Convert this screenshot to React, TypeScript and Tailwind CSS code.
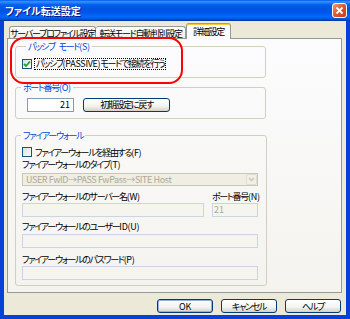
import React from "react";

function L({ children }: { children: React.ReactNode }) {
  return <span className="tracking-[-0.3px]">{children}</span>;
}

function Check({ checked }: { checked?: boolean }) {
  return (
    <div className="w-[10px] h-[10px] border border-[#1C5180] bg-[linear-gradient(135deg,#DCDCD7,#FFFFFF)] flex items-center justify-center shrink-0">
      {checked && (
        <svg width="8" height="8" viewBox="0 0 8 8">
          <path d="M1 4 L3 6 L7 1.5" stroke="#21A121" strokeWidth="1.8" fill="none" />
        </svg>
      )}
    </div>
  );
}

function Btn({ children, def, w }: { children: React.ReactNode; def?: boolean; w: string }) {
  return (
    <div
      className={`${w} h-[14px] rounded-[3px] border border-[#003C74] bg-[linear-gradient(180deg,#FFFFFF,#F3F3EF_60%,#D6D0C5)] flex items-center justify-center whitespace-nowrap ${
        def ? "shadow-[inset_0_0_0_1px_#97AEE2]" : ""
      }`}
    >
      {children}
    </div>
  );
}

export default function App() {
  return (
    <div className="relative w-[350px] h-[319px] bg-[#0841D9] flex flex-col font-['Noto_Sans_CJK_JP',sans-serif] [font-feature-settings:'palt'] text-[9px] leading-[11px] tracking-[-1.3px] text-black overflow-hidden">
      {/* Title bar */}
      <div className="h-[21px] shrink-0 flex items-center pl-[5px] pr-[3px] bg-[linear-gradient(180deg,#0058EE_0%,#3593FF_8%,#0262EE_22%,#0054E3_40%,#0055EB_60%,#026AFE_80%,#0052D6_92%,#003092_100%)]">
        <span className="text-white font-bold text-[10px] tracking-[0px] [text-shadow:1px_1px_0_#0A1883]">
          ファイル転送設定
        </span>
        <div className="ml-auto w-[15px] h-[15px] rounded-[3px] border border-white bg-[linear-gradient(135deg,#F09A7D,#E0552B_50%,#C23F1A)] flex items-center justify-center">
          <svg width="9" height="9" viewBox="0 0 9 9">
            <path d="M1.5 1.5 L7.5 7.5 M7.5 1.5 L1.5 7.5" stroke="white" strokeWidth="1.8" />
          </svg>
        </div>
      </div>

      {/* Body */}
      <div className="flex-1 ml-[4px] mr-[4px] mb-[4px] bg-[#ECE9D8] flex flex-col pt-[2px]">
        {/* Tabs */}
        <div className="h-[16px] flex items-end pl-[5px]">
          <div className="w-[87px] h-[13px] border border-b-0 border-[#919B9C] rounded-t-[3px] bg-[linear-gradient(180deg,#FFFFFF,#ECEBE6)] flex items-center justify-center whitespace-nowrap">
            サーバープロファイル設定
          </div>
          <div className="w-[90px] h-[13px] border border-b-0 border-l-0 border-[#919B9C] rounded-t-[3px] bg-[linear-gradient(180deg,#FFFFFF,#ECEBE6)] flex items-center justify-center whitespace-nowrap">
            転送モード自動判別設定
          </div>
          <div className="relative z-10 w-[45px] h-[16px] border border-b-0 border-[#919B9C] border-t-[#E68B2C] rounded-t-[3px] bg-[#FCFCFE] shadow-[inset_0_1px_0_#FFC73C] flex items-center justify-center whitespace-nowrap">
            詳細設定
          </div>
        </div>

        {/* Panel */}
        <div className="mt-[-1px] ml-[3px] mr-[4px] h-[255px] border border-[#919B9C] bg-[linear-gradient(180deg,#FCFCFE,#F4F3EE)] pl-[7px] pt-[2px]">
          {/* Group 1 */}
          <fieldset className="w-[251px] border border-[#D0D0BF] rounded-[3px] pl-[6px] pb-[7px]">
            <legend className="ml-[4px] px-[2px] text-[#0046D5] whitespace-nowrap">
              パッシブ<span className="ml-[4px]">モード</span>
              <L>(S)</L>
            </legend>
            <div className="mt-[5px] h-[13px] flex items-center gap-[2px]">
              <Check checked />
              <span className="border border-dotted border-black px-[1px] leading-[10px] whitespace-nowrap">
                パッシブ<L>(PASSIVE)</L>モードで接続を行う
              </span>
            </div>
          </fieldset>

          {/* Group 2 */}
          <fieldset className="mt-[4px] w-[251px] border border-[#D0D0BF] rounded-[3px] pl-[11px] pb-[6px]">
            <legend className="ml-[-6px] px-[2px] text-[#0046D5] whitespace-nowrap">
              ポート番号<L>(O)</L>
            </legend>
            <div className="mt-[4px] h-[15px] flex items-center">
              <div className="w-[47px] h-[14px] border border-[#7F9DB9] bg-white flex items-center justify-end pr-[3px] tracking-[0px]">
                21
              </div>
              <div className="ml-[9px]">
                <Btn w="w-[87px]">初期設定に戻す</Btn>
              </div>
            </div>
          </fieldset>

          {/* Group 3 */}
          <fieldset className="mt-[11px] w-[251px] border border-[#D0D0BF] rounded-[3px] px-[6px] pb-[5px]">
            <legend className="ml-[-1px] px-[2px] text-[#0046D5] whitespace-nowrap">ファイアーウォール</legend>
            <div className="mt-[5px] h-[12px] flex items-center gap-[2px]">
              <Check />
              <span className="px-[1px] whitespace-nowrap">
                ファイアーウォールを経由する<L>(F)</L>
              </span>
            </div>
            <div className="h-[11px] mt-[1px] whitespace-nowrap">
              ファイアーウォールのタイプ<L>(T)</L>
            </div>
            <div className="mt-[3px] w-[236px] h-[13px] border border-[#C9C7BA] bg-[#F0EEE3] flex items-center pl-[3px] text-[#ACA899] tracking-[-0.4px]">
              <span className="flex-1 whitespace-nowrap">USER FwID→PASS FwPass→SITE Host</span>
              <div className="w-[11px] h-[11px] rounded-[2px] bg-[#F1EFE7] border border-[#E0DED3] flex items-center justify-center">
                <svg width="7" height="5" viewBox="0 0 7 5">
                  <path d="M1 1 L3.5 3.5 L6 1" stroke="#C9C7BA" strokeWidth="1.4" fill="none" />
                </svg>
              </div>
            </div>
            <div className="mt-[5px] h-[11px] flex whitespace-nowrap">
              <span className="w-[190px]">
                ファイアーウォールのサーバー名<L>(W)</L>
              </span>
              <span>
                ポート番号<L>(N)</L>
              </span>
            </div>
            <div className="mt-[1px] flex gap-[8px]">
              <div className="w-[182px] h-[14px] border border-[#C9D5E0] bg-[#F5F4EE]" />
              <div className="w-[46px] h-[14px] border border-[#C9D5E0] bg-[#F5F4EE] text-[#ACA899] pl-[1px] leading-[12px] tracking-[0px]">
                21
              </div>
            </div>
            <div className="mt-[4px] h-[11px] whitespace-nowrap">
              ファイアーウォールのユーザー<L>ID(U)</L>
            </div>
            <div className="mt-[2px] w-[236px] h-[14px] border border-[#C9D5E0] bg-[#F5F4EE]" />
            <div className="mt-[6px] h-[11px] whitespace-nowrap">
              ファイアーウォールのパスワード<L>(P)</L>
            </div>
            <div className="mt-[1px] w-[236px] h-[14px] border border-[#C9D5E0] bg-[#F5F4EE]" />
          </fieldset>
        </div>

        {/* Buttons */}
        <div className="mt-[6px] flex justify-end gap-[8px] pr-[5px]">
          <Btn w="w-[56px]" def>
            <L>OK</L>
          </Btn>
          <Btn w="w-[56px]">キャンセル</Btn>
          <Btn w="w-[56px]">ヘルプ</Btn>
        </div>
      </div>

      {/* Red highlight annotation */}
      <div className="absolute left-[10px] top-[37px] w-[173px] h-[47px] border-2 border-[#FF0000] rounded-[14px] pointer-events-none" />
    </div>
  );
}
